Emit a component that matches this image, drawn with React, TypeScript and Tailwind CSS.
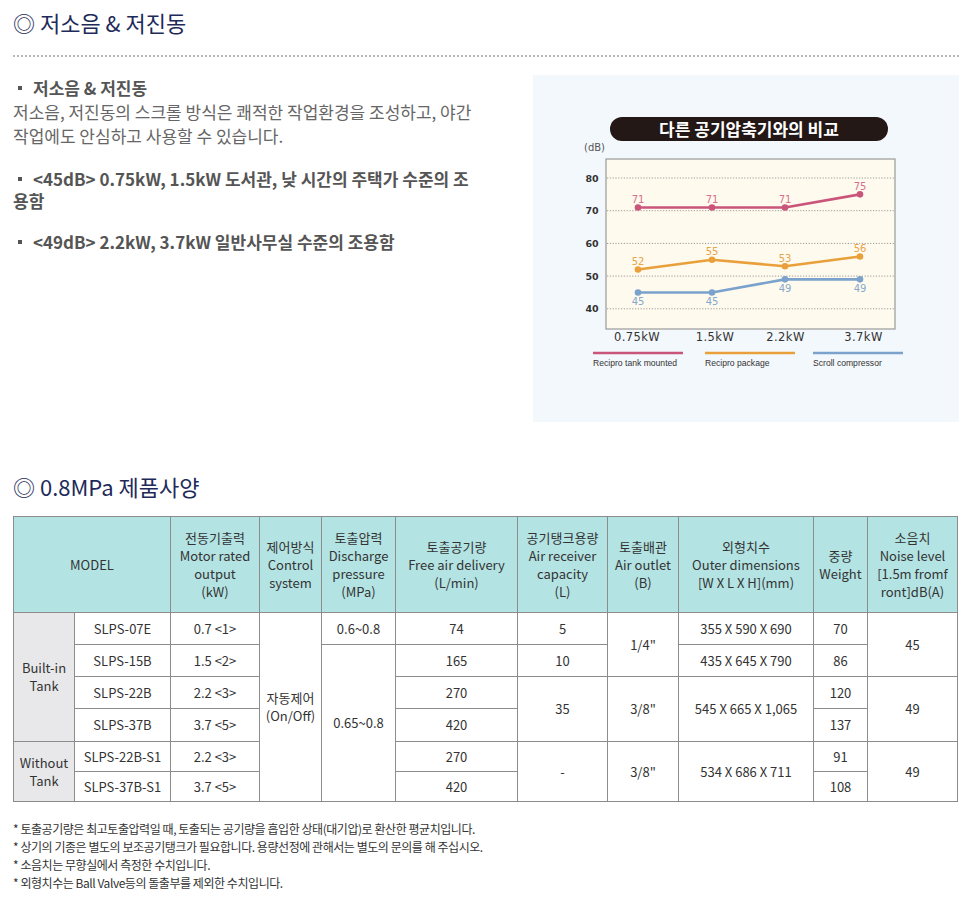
import React from "react";

function Chart() {
  const xs = [105, 179, 252, 327];
  const y = (v: number) => 103 + (80 - v) * 3.27;
  const series = [
    { vals: [71, 71, 71, 75], line: "#c9557b", label: "#d4708f", below: false },
    { vals: [52, 55, 53, 56], line: "#e9a03a", label: "#e7a44c", below: false },
    { vals: [45, 45, 49, 49], line: "#7aa2cc", label: "#86a9cb", below: true },
  ];
  const grid = [80, 70, 60, 50, 40];
  const xl = [
    { t: "0.75kW", x: 104 },
    { t: "1.5kW", x: 182 },
    { t: "2.2kW", x: 252.5 },
    { t: "3.7kW", x: 330.5 },
  ];
  const legend = [
    { t: "Recipro tank mounted", x: 60, c: "#c9557b" },
    { t: "Recipro package", x: 172, c: "#e9a03a" },
    { t: "Scroll compressor", x: 280, c: "#7aa2cc" },
  ];
  return (
    <svg width="426" height="347" viewBox="0 0 426 347">
      <rect x="77" y="42" width="278" height="24" rx="12" fill="#231815" />
      <text
        x="216"
        y="60.5"
        textAnchor="middle"
        fill="#ffffff"
        fontSize="17"
        fontWeight="700"
        fontFamily="Noto Sans CJK KR, sans-serif"
      >
        다른 공기압축기와의 비교
      </text>
      <text x="51" y="76" fill="#555" fontSize="10" fontFamily="DejaVu Sans, sans-serif">
        (dB)
      </text>
      <rect x="73" y="84" width="289" height="170" fill="#fffaee" stroke="#999" strokeWidth="1.2" />
      {grid.map((g) => (
        <g key={g}>
          <line
            x1="74"
            x2="361"
            y1={y(g)}
            y2={y(g)}
            stroke="#9a9a9a"
            strokeWidth="1"
            strokeDasharray="1.2 1.6"
          />
          <text
            x="59"
            y={y(g) + 3.5}
            textAnchor="middle"
            fill="#333"
            fontSize="9.5"
            fontWeight="700"
            fontFamily="DejaVu Sans, sans-serif"
          >
            {g}
          </text>
        </g>
      ))}
      {series.map((s, si) => (
        <g key={si}>
          <polyline
            points={s.vals.map((v, i) => `${xs[i]},${y(v)}`).join(" ")}
            fill="none"
            stroke={s.line}
            strokeWidth="2.6"
            strokeLinejoin="round"
          />
          {s.vals.map((v, i) => (
            <g key={i}>
              <circle cx={xs[i]} cy={y(v)} r="3.3" fill={s.line} />
              <text
                x={xs[i]}
                y={s.below ? y(v) + 13 : y(v) - 4.5}
                textAnchor="middle"
                fill={s.label}
                fontSize="10"
                fontFamily="DejaVu Sans, sans-serif"
              >
                {v}
              </text>
            </g>
          ))}
        </g>
      ))}
      {xl.map((l) => (
        <text
          key={l.t}
          x={l.x}
          y="266"
          textAnchor="middle"
          fill="#333"
          fontSize="11.5"
          letterSpacing="0.4"
          fontFamily="DejaVu Sans, sans-serif"
        >
          {l.t}
        </text>
      ))}
      {legend.map((l) => (
        <g key={l.t}>
          <line x1={l.x} x2={l.x + 90} y1="278" y2="278" stroke={l.c} strokeWidth="2.4" />
          <text x={l.x} y="291" fill="#333" fontSize="8.6" fontFamily="Liberation Sans, sans-serif">
            {l.t}
          </text>
        </g>
      ))}
    </svg>
  );
}

const cell = "border border-[#8c8c8c] px-0 align-middle";
const hd = cell + " bg-[#b3e3e3]";
const gr = cell + " bg-[#e8e8ea]";

function Bullet() {
  return <span className="ml-[5px] mr-[11px] inline-block h-[4px] w-[4px] bg-[#555] align-middle relative top-[-2px]" />;
}

export default function App() {
  return (
    <div className="w-[972px] bg-white px-[13px] pt-[8px] pb-[8px] font-['Noto_Sans_CJK_KR','Noto_Sans',sans-serif]">
      <h2 className="text-[22px] leading-[28px] font-normal text-[#1e2a5a]">◎ 저소음 &amp; 저진동</h2>
      <div className="mt-[19px] border-b-2 border-dotted border-[#b8b8b8]" />
      <div className="mt-[18px] flex justify-between">
        <div className="w-[480px] pt-[1px]">
          <p className="text-[17px] leading-[24px] font-bold text-[#555] whitespace-nowrap">
            <Bullet />저소음 &amp; 저진동
          </p>
          <p className="text-[17px] leading-[24px] text-[#666] whitespace-nowrap">
            저소음, 저진동의 스크롤 방식은 쾌적한 작업환경을 조성하고, 야간
            <br />
            작업에도 안심하고 사용할 수 있습니다.
          </p>
          <p className="mt-[20px] text-[17px] leading-[22px] font-bold text-[#555] whitespace-nowrap">
            <Bullet />&lt;45dB&gt; 0.75kW, 1.5kW 도서관, 낮 시간의 주택가 수준의 조
            <br />
            용함
          </p>
          <p className="mt-[19px] text-[17px] leading-[22px] font-bold text-[#555] whitespace-nowrap">
            <Bullet />&lt;49dB&gt; 2.2kW, 3.7kW 일반사무실 수준의 조용함
          </p>
        </div>
        <div className="h-[347px] w-[426px] bg-[#f3f8fc]">
          <Chart />
        </div>
      </div>

      <h2 className="mt-[50px] text-[22px] leading-[28px] font-normal text-[#1e2a5a]">◎ 0.8MPa 제품사양</h2>

      <table className="mt-[16px] w-[944px] table-fixed border-collapse text-center text-[13px] leading-[18px] text-[#333]">
        <colgroup>
          <col className="w-[61px]" />
          <col className="w-[96px]" />
          <col className="w-[89px]" />
          <col className="w-[62px]" />
          <col className="w-[74px]" />
          <col className="w-[122px]" />
          <col className="w-[90px]" />
          <col className="w-[71px]" />
          <col className="w-[135px]" />
          <col className="w-[54px]" />
          <col className="w-[90px]" />
        </colgroup>
        <thead>
          <tr className="h-[96px]">
            <td colSpan={2} className={hd}>MODEL</td>
            <td className={hd}>전동기출력<br />Motor rated<br />output<br />(kW)</td>
            <td className={hd}>제어방식<br />Control<br />system</td>
            <td className={hd}>토출압력<br />Discharge<br />pressure<br />(MPa)</td>
            <td className={hd}>토출공기량<br />Free air delivery<br />(L/min)</td>
            <td className={hd}>공기탱크용량<br />Air receiver<br />capacity<br />(L)</td>
            <td className={hd}>토출배관<br />Air outlet<br />(B)</td>
            <td className={hd}>외형치수<br />Outer dimensions<br />[W X L X H](mm)</td>
            <td className={hd}>중량<br />Weight</td>
            <td className={hd}>소음치<br />Noise level<br />[1.5m fromf<br />ront]dB(A)</td>
          </tr>
        </thead>
        <tbody>
          <tr className="h-[32px]">
            <td rowSpan={4} className={gr}>Built-in<br />Tank</td>
            <td className={cell}>SLPS-07E</td>
            <td className={cell}>0.7 &lt;1&gt;</td>
            <td rowSpan={6} className={cell}>자동제어<br />(On/Off)</td>
            <td className={cell}>0.6~0.8</td>
            <td className={cell}>74</td>
            <td className={cell}>5</td>
            <td rowSpan={2} className={cell}>1/4"</td>
            <td className={cell}>355 X 590 X 690</td>
            <td className={cell}>70</td>
            <td rowSpan={2} className={cell}>45</td>
          </tr>
          <tr className="h-[32px]">
            <td className={cell}>SLPS-15B</td>
            <td className={cell}>1.5 &lt;2&gt;</td>
            <td rowSpan={5} className={cell}>0.65~0.8</td>
            <td className={cell}>165</td>
            <td className={cell}>10</td>
            <td className={cell}>435 X 645 X 790</td>
            <td className={cell}>86</td>
          </tr>
          <tr className="h-[32px]">
            <td className={cell}>SLPS-22B</td>
            <td className={cell}>2.2 &lt;3&gt;</td>
            <td className={cell}>270</td>
            <td rowSpan={2} className={cell}>35</td>
            <td rowSpan={2} className={cell}>3/8"</td>
            <td rowSpan={2} className={cell}>545 X 665 X 1,065</td>
            <td className={cell}>120</td>
            <td rowSpan={2} className={cell}>49</td>
          </tr>
          <tr className="h-[33px]">
            <td className={cell}>SLPS-37B</td>
            <td className={cell}>3.7 &lt;5&gt;</td>
            <td className={cell}>420</td>
            <td className={cell}>137</td>
          </tr>
          <tr className="h-[30px]">
            <td rowSpan={2} className={gr}>Without<br />Tank</td>
            <td className={cell}>SLPS-22B-S1</td>
            <td className={cell}>2.2 &lt;3&gt;</td>
            <td className={cell}>270</td>
            <td rowSpan={2} className={cell}>-</td>
            <td rowSpan={2} className={cell}>3/8"</td>
            <td rowSpan={2} className={cell}>534 X 686 X 711</td>
            <td className={cell}>91</td>
            <td rowSpan={2} className={cell}>49</td>
          </tr>
          <tr className="h-[30px]">
            <td className={cell}>SLPS-37B-S1</td>
            <td className={cell}>3.7 &lt;5&gt;</td>
            <td className={cell}>420</td>
            <td className={cell}>108</td>
          </tr>
        </tbody>
      </table>

      <div className="mt-[18px] text-[12px] leading-[18px] tracking-[-0.45px] text-[#333]">
        <p>* 토출공기량은 최고토출압력일 때, 토출되는 공기량을 흡입한 상태(대기압)로 환산한 평균치입니다.</p>
        <p>* 상기의 기종은 별도의 보조공기탱크가 필요합니다. 용량선정에 관해서는 별도의 문의를 해 주십시오.</p>
        <p>* 소음치는 무향실에서 측정한 수치입니다.</p>
        <p>* 외형치수는 Ball Valve등의 돌출부를 제외한 수치입니다.</p>
      </div>
    </div>
  );
}
